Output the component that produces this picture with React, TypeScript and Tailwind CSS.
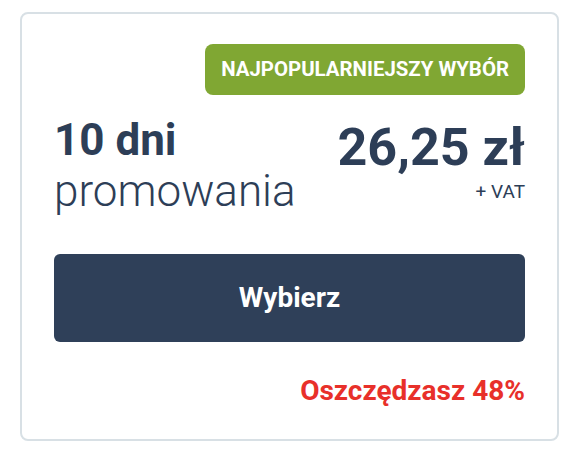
export default function App() {
  return (
    <div className="min-h-screen bg-white font-['Roboto',sans-serif] text-[#2d3e57]">
      <div className="pl-[20px] pt-[12px]">
        <div className="flex h-[429px] w-[539px] flex-col rounded-lg border-2 border-[#d8e0e5] px-8 pt-[30px]">
          <div className="flex justify-end">
            <span className="flex h-[51px] items-center rounded-lg bg-[#80a733] px-4 text-[20.4px] font-bold uppercase text-white">
              Najpopularniejszy wybór
            </span>
          </div>

          <div className="mt-[20px] flex items-start justify-between">
            <div>
              <p className="text-[44px] font-bold leading-[51px]">10 dni</p>
              <p className="text-[44px] font-light leading-[51px]">promowania</p>
            </div>
            <div className="flex flex-col items-end pt-[5px]">
              <p className="text-[52px] font-bold leading-[56px]">26,25 zł</p>
              <p className="mt-[6px] text-[19px] leading-[20px]">+ VAT</p>
            </div>
          </div>

          <button
            type="button"
            className="mt-[37px] flex h-[88px] w-full items-center justify-center rounded-md bg-[#2f4059] text-[28px] font-bold text-white"
          >
            Wybierz
          </button>

          <p className="mt-[33px] text-right text-[28px] font-bold leading-[32px] text-[#e8302a]">
            Oszczędzasz 48%
          </p>
        </div>
      </div>
    </div>
  );
}
